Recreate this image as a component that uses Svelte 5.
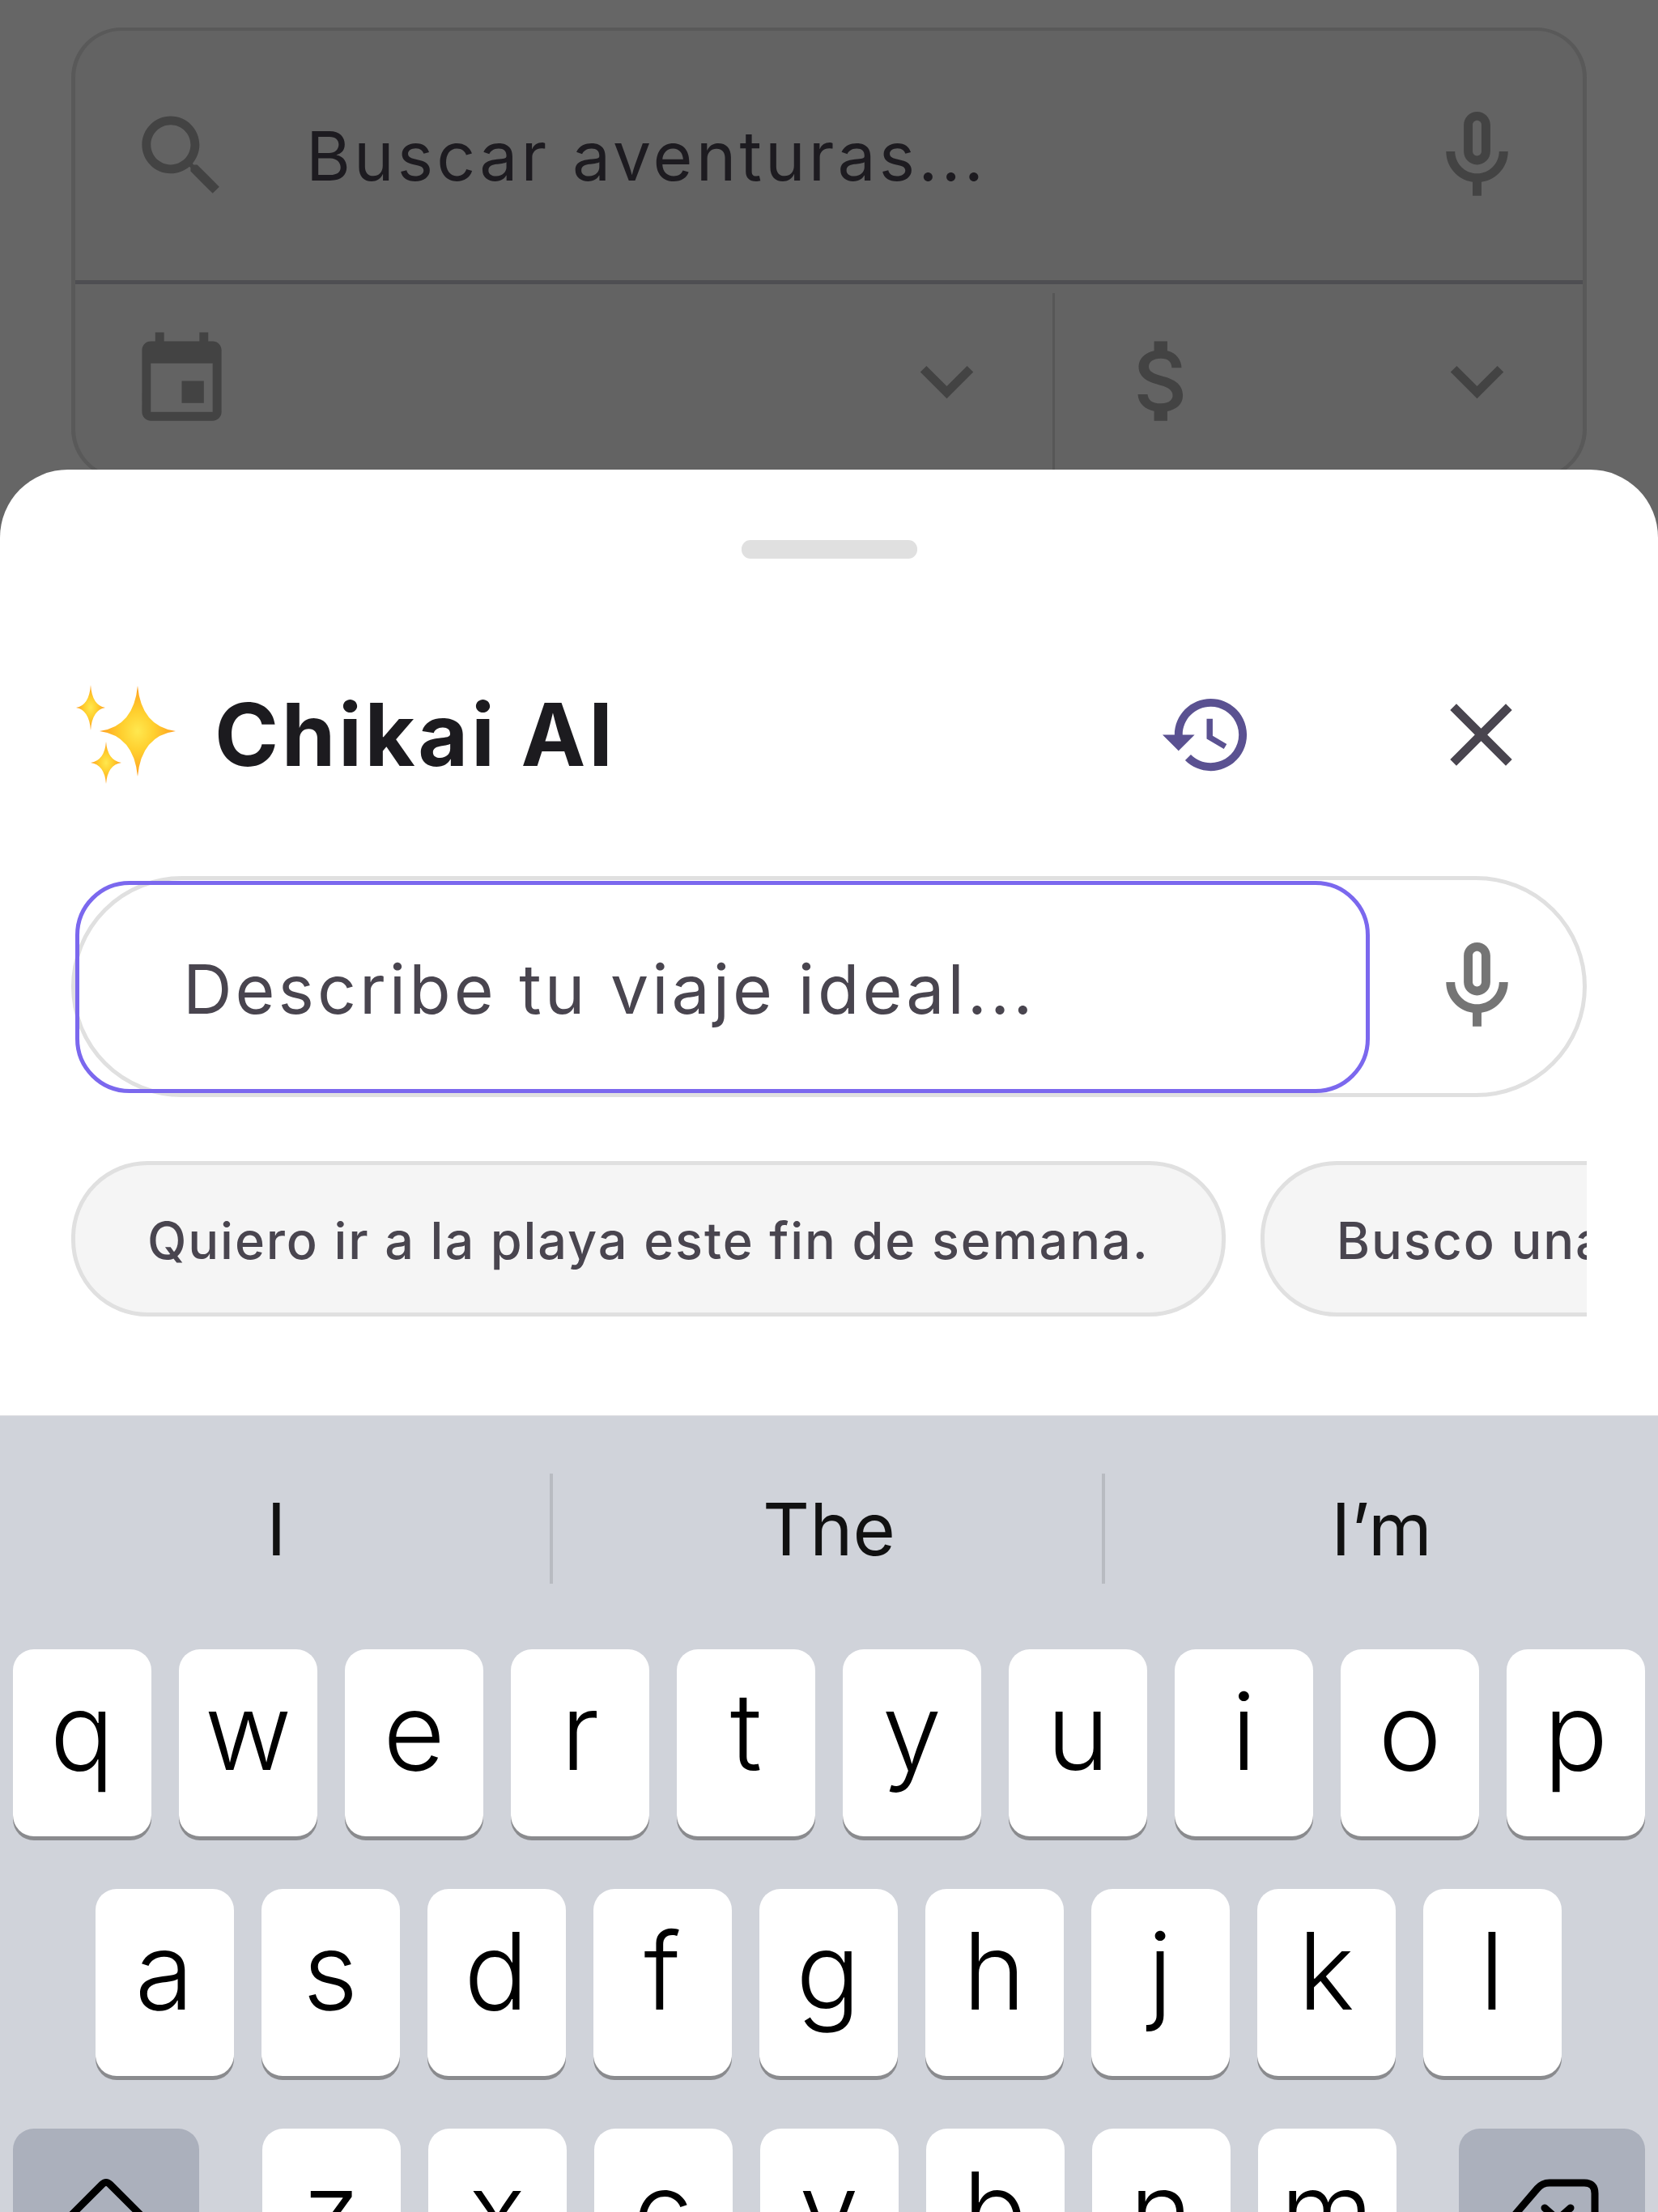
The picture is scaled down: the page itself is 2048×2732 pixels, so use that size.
<script>
  const search = "M15.5 14h-.79l-.28-.27C15.41 12.59 16 11.11 16 9.5 16 5.91 13.09 3 9.5 3S3 5.91 3 9.5 5.91 16 9.5 16c1.61 0 3.09-.59 4.23-1.57l.27.28v.79l5 4.99L20.49 19l-4.99-5zm-6 0C7.01 14 5 11.99 5 9.5S7.01 5 9.5 5 14 7.01 14 9.5 11.99 14 9.5 14z";
  const mic = "M12 14c1.66 0 3-1.34 3-3V5c0-1.66-1.34-3-3-3S9 3.34 9 5v6c0 1.66 1.34 3 3 3zm-1-9c0-.55.45-1 1-1s1 .45 1 1v6c0 .55-.45 1-1 1s-1-.45-1-1V5zm6 6c0 2.76-2.24 5-5 5s-5-2.24-5-5H5c0 3.53 2.61 6.43 6 6.92V21h2v-3.08c3.39-.49 6-3.39 6-6.92h-2z";
  const event = "M17 12h-5v5h5v-5zM16 1v2H8V1H6v2H5c-1.11 0-1.99.9-1.99 2L3 19c0 1.1.89 2 2 2h14c1.1 0 2-.9 2-2V5c0-1.1-.9-2-2-2h-1V1h-2zm3 18H5V8h14v11z";
  const chevron = "M16.59 8.59L12 13.17 7.41 8.59 6 10l6 6 6-6z";
  const money = "M11.8 10.9c-2.27-.59-3-1.2-3-2.15 0-1.09 1.01-1.85 2.7-1.85 1.78 0 2.44.85 2.5 2.1h2.21c-.07-1.72-1.12-3.3-3.21-3.81V3h-3v2.16c-1.94.42-3.5 1.68-3.5 3.61 0 2.31 1.91 3.46 4.7 4.13 2.5.6 3 1.48 3 2.41 0 .69-.49 1.79-2.7 1.79-2.06 0-2.87-.92-2.98-2.1h-2.2c.12 2.19 1.76 3.42 3.68 3.83V21h3v-2.15c1.95-.37 3.5-1.5 3.5-3.55 0-2.84-2.43-3.81-4.7-4.4z";
  const history = "M13 3c-4.97 0-9 4.03-9 9H1l3.89 3.89.07.14L9 12H6c0-3.87 3.13-7 7-7s7 3.13 7 7-3.13 7-7 7c-1.93 0-3.68-.79-4.94-2.06l-1.42 1.42C8.27 19.99 10.51 21 13 21c4.97 0 9-4.03 9-9s-4.03-9-9-9zm-1 5v5l4.28 2.54.72-1.21-3.5-2.08V8H12z";
  const close = "M19 6.41L17.59 5 12 10.59 6.41 5 5 6.41 10.59 12 5 17.59 6.41 19 12 13.41 17.59 19 19 17.59 13.41 12z";

  function star(cx, cy, rx, ry, k) {
    const a = rx * k, b = ry * k;
    return `M${cx} ${cy - ry}Q${cx + a} ${cy - b} ${cx + rx} ${cy}Q${cx + a} ${cy + b} ${cx} ${cy + ry}Q${cx - a} ${cy + b} ${cx - rx} ${cy}Q${cx - a} ${cy - b} ${cx} ${cy - ry}Z`;
  }

  const row1 = ["q", "w", "e", "r", "t", "y", "u", "i", "o", "p"];
  const row2 = ["a", "s", "d", "f", "g", "h", "j", "k", "l"];
  const row3 = ["z", "x", "c", "v", "b", "n", "m"];
</script>

{#snippet icon(d, cls)}
  <svg class="icon {cls}" viewBox="0 0 24 24"><path {d} /></svg>
{/snippet}

{#snippet key(letter)}
  <div class="key"><span>{letter}</span></div>
{/snippet}

<div class="screen">
  <div class="backdrop">
    <div class="card">
      <div class="search-row">
        {@render icon(search, "dim")}
        <span class="search-text">Buscar aventuras...</span>
        {@render icon(mic, "dim push")}
      </div>
      <div class="filter-row">
        <div class="cell cell-date">
          {@render icon(event, "dim")}
          {@render icon(chevron, "dim")}
        </div>
        <div class="cell cell-price">
          {@render icon(money, "dim")}
          {@render icon(chevron, "dim")}
        </div>
      </div>
    </div>
  </div>

  <div class="sheet">
    <div class="handle"></div>
    <div class="header">
      <svg class="sparkles" viewBox="92 845 128 125">
        <defs>
          <radialGradient id="spark" cx="0.5" cy="0.5" r="0.55">
            <stop offset="0" stop-color="#ffe84f" />
            <stop offset="0.4" stop-color="#ffcf2e" />
            <stop offset="1" stop-color="#ff9620" />
          </radialGradient>
        </defs>
        <path fill="url(#spark)" d={star(170, 903, 47, 56, 0.1)} />
        <path fill="url(#spark)" d={star(112, 874, 18, 28, 0.1)} />
        <path fill="url(#spark)" d={star(131, 942, 19, 26, 0.1)} />
      </svg>
      <h1>Chikai AI</h1>
      <svg class="icon history" viewBox="0 0 24 24"><path d={history} /></svg>
      {@render icon(close, "close")}
    </div>

    <div class="prompt">
      <div class="field"><span>Describe tu viaje ideal...</span></div>
      {@render icon(mic, "mic-grey")}
    </div>

    <div class="chips">
      <div class="chip">Quiero ir a la playa este fin de semana.</div>
      <div class="chip">Busco una escapada barata.</div>
    </div>
  </div>

  <div class="keyboard">
    <div class="suggestions">
      <div class="sug">I</div>
      <div class="sug">The</div>
      <div class="sug">I’m</div>
    </div>
    <div class="rows">
      <div class="row">
        {#each row1 as l}{@render key(l)}{/each}
      </div>
      <div class="row row-middle">
        {#each row2 as l}{@render key(l)}{/each}
      </div>
      <div class="row row-bottom">
        <div class="key fn">
          <svg class="fn-icon" viewBox="0 0 120 120">
            <path d="M14 60 L55 19 Q60 14 65 19 L106 60" />
          </svg>
        </div>
        <div class="letters">
          {#each row3 as l}{@render key(l)}{/each}
        </div>
        <div class="key fn">
          <svg class="fn-icon" viewBox="0 0 120 120">
            <path d="M0 73 L42 24 Q48 17 57 17 H100 Q113 17 113 30 V120" />
            <path d="M51 48 L67 62 M83 48 L67 62" />
          </svg>
        </div>
      </div>
    </div>
  </div>
</div>

<style>
  :global(body) {
    margin: 0;
    background: #666;
  }
  .screen {
    width: 2048px;
    height: 2732px;
    overflow: hidden;
    font-family: Inter, "Liberation Sans", sans-serif;
    display: flex;
    flex-direction: column;
  }
  .icon {
    width: 131px;
    height: 131px;
    flex: none;
    display: block;
  }
  .dim {
    fill: #434343;
  }
  .push {
    margin-left: auto;
  }

  .backdrop {
    height: 664px;
    margin-bottom: -84px;
    background: #666;
    padding: 34px 88px 0;
    box-sizing: border-box;
    overflow: hidden;
    flex: none;
  }
  .card {
    height: 558px;
    box-sizing: border-box;
    border: 4px solid #595959;
    border-left-width: 5px;
    border-right-width: 5px;
    border-radius: 62px;
    background: #636363;
    display: flex;
    flex-direction: column;
  }
  .search-row {
    height: 308px;
    flex: none;
    display: flex;
    align-items: center;
    padding: 0 65px 0 66px;
    border-bottom: 5px solid #4e4e52;
  }
  .search-text {
    margin-left: 88px;
    font-size: 84px;
    letter-spacing: 4.1px;
    color: #1d1b20;
  }
  .filter-row {
    flex: 1;
    display: flex;
  }
  .cell {
    display: flex;
    justify-content: space-between;
    align-items: flex-start;
    padding-top: 54px;
    box-sizing: border-box;
  }
  .cell-date {
    width: 1207px;
    padding-left: 66px;
    padding-right: 65px;
  }
  .cell-price {
    flex: 1;
    margin-top: 11px;
    padding-top: 43px;
    border-left: 3px solid #575757;
    padding-left: 68px;
    padding-right: 65px;
  }

  .sheet {
    position: relative;
    flex: none;
    height: 1168px;
    box-sizing: border-box;
    background: #fff;
    border-radius: 84px 84px 0 0;
    padding: 87px 88px 0;
    overflow: hidden;
  }
  .handle {
    width: 217px;
    height: 23px;
    margin: 0 auto;
    border-radius: 11px;
    background: #e0e0e0;
  }
  .header {
    margin-top: 90px;
    height: 254px;
    display: flex;
    align-items: center;
  }
  .sparkles {
    width: 128px;
    height: 125px;
    margin-left: 4px;
    flex: none;
  }
  h1 {
    margin: 0 0 0 45px;
    font-size: 107px;
    font-weight: 700;
    letter-spacing: 3.6px;
    color: #1c1b1f;
    line-height: 1;
  }
  .history {
    margin-left: auto;
    width: 119px;
    height: 119px;
    fill: #5a5191;
  }
  .close {
    margin-left: 214px;
    margin-right: 65px;
    fill: #49454f;
  }

  .prompt {
    margin-top: 48px;
    height: 273px;
    box-sizing: border-box;
    border: 5px solid #e0e0e0;
    border-radius: 137px;
    display: flex;
    align-items: center;
  }
  .field {
    width: 1599px;
    height: 262px;
    box-sizing: border-box;
    border: 5px solid #7b68ee;
    border-radius: 67px;
    padding-left: 128px;
    padding-top: 5px;
    display: flex;
    align-items: center;
    flex: none;
    font-size: 84px;
    letter-spacing: 4px;
    color: #49454f;
  }
  .mic-grey {
    margin-left: auto;
    margin-right: 65px;
    fill: #757575;
  }

  .chips {
    margin-top: 79px;
    display: flex;
    gap: 43px;
    overflow: hidden;
  }
  .chip {
    flex: none;
    height: 192px;
    box-sizing: border-box;
    border: 5px solid #e0e0e0;
    border-radius: 94px;
    background: #f5f5f5;
    padding: 4px 89px 0;
    display: flex;
    align-items: center;
    white-space: nowrap;
    font-size: 63px;
    font-weight: 500;
    letter-spacing: 1.9px;
    color: #49454f;
  }

  .keyboard {
    flex: 1;
    background: #d0d3da;
    border-top: 1px solid #dcdde1;
    box-sizing: border-box;
  }
  .suggestions {
    height: 288px;
    display: grid;
    grid-template-columns: repeat(3, 1fr);
    box-sizing: border-box;
    padding-top: 71px;
    padding-bottom: 81px;
  }
  .sug {
    display: flex;
    align-items: center;
    justify-content: center;
    font-size: 90px;
    color: #111;
    border-right: 4px solid #b8bbc1;
    padding-left: 4px;
  }
  .sug:last-child {
    border-right: 0;
    padding-left: 0;
  }
  .rows {
    display: flex;
    flex-direction: column;
    gap: 65px;
    padding: 0 16px;
  }
  .row {
    display: flex;
    justify-content: center;
    gap: 34px;
  }
  .row-middle {
    padding-right: 2px;
  }
  .row-bottom {
    justify-content: space-between;
    gap: 0;
  }
  .letters {
    display: flex;
    gap: 34px;
  }
  .key {
    width: 171px;
    height: 231px;
    flex: none;
    box-sizing: border-box;
    background: #fff;
    border-radius: 26px;
    box-shadow: 0 5px 0 #8a8b8e;
    display: flex;
    align-items: center;
    justify-content: center;
    padding-bottom: 29px;
    font-size: 132px;
    font-weight: 300;
    line-height: 1;
    color: #000;
  }
  .fn {
    width: 230px;
    background: #abb0bc;
    padding: 0;
    align-items: flex-start;
    justify-content: center;
  }
  .fn-icon {
    width: 120px;
    height: 120px;
    margin-top: 50px;
    fill: none;
    stroke: #000;
    stroke-width: 9;
    stroke-linecap: round;
  }
</style>
